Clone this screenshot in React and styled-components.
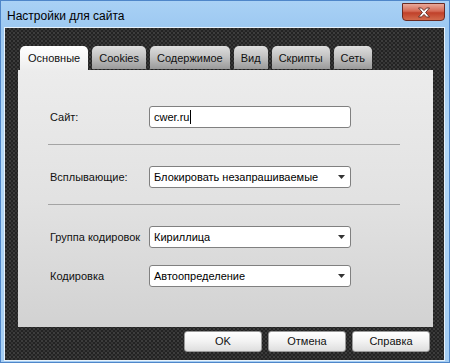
import React from "react";
import styled, { createGlobalStyle } from "styled-components";

const GlobalStyle = createGlobalStyle`
  body {
    margin: 0;
    font-family: "Liberation Sans", Arial, sans-serif;
  }
`;

const tabs = ["Основные", "Cookies", "Содержимое", "Вид", "Скрипты", "Сеть"];

function Select({ value }) {
  return (
    <Field>
      <span>{value}</span>
      <Arrow viewBox="0 0 7 4">
        <path d="M0 0h7L3.5 4z" fill="#333" />
      </Arrow>
    </Field>
  );
}

function App() {
  return (
    <>
      <GlobalStyle />
      <Window>
        <TitleBar>
          <Title>Настройки для сайта</Title>
          <CloseButton>
            <svg width="14" height="11" viewBox="0 0 14 11">
              <path
                d="M1.5 1h3l2.5 2.6L9.5 1h3L8.6 5.5l3.9 4.5h-3L7 7.4 4.5 10h-3l3.9-4.5z"
                fill="#fff"
                stroke="#5a2a24"
                strokeWidth="0.9"
                strokeLinejoin="round"
              />
            </svg>
          </CloseButton>
        </TitleBar>
        <Body>
          <TabRow>
            {tabs.map((t, i) => (
              <Tab key={t} $active={i === 0}>{t}</Tab>
            ))}
          </TabRow>
          <Panel>
            <Row>
              <Label>Сайт:</Label>
              <Field>
                <span>
                  cwer.ru
                  <Caret />
                </span>
              </Field>
            </Row>
            <Divider />
            <Row>
              <Label>Всплывающие:</Label>
              <Select value="Блокировать незапрашиваемые" />
            </Row>
            <Divider />
            <Row>
              <Label>Группа кодировок</Label>
              <Select value="Кириллица" />
            </Row>
            <Row $gap={17}>
              <Label>Кодировка</Label>
              <Select value="Автоопределение" />
            </Row>
          </Panel>
          <ButtonRow>
            <Button>OK</Button>
            <Button>Отмена</Button>
            <Button>Справка</Button>
          </ButtonRow>
        </Body>
      </Window>
    </>
  );
}

const Window = styled.div`
  width: 450px;
  height: 363px;
  box-sizing: border-box;
  border: 1px solid #4f86c9;
  background: linear-gradient(180deg, #a9d1f5 0%, #9cc8f1 8%, #b4d8f7 40%, #a4cdf3 100%);
  display: flex;
  flex-direction: column;
`;

const TitleBar = styled.div`
  height: 26px;
  display: flex;
  justify-content: space-between;
  padding: 0 4px 0 6px;
`;

const Title = styled.div`
  font-size: 12px;
  color: #000;
  line-height: 30px;
`;

const CloseButton = styled.div`
  width: 43px;
  height: 18px;
  margin-top: 2px;
  box-sizing: border-box;
  border: 1px solid #6b2a22;
  border-radius: 0 0 4px 4px;
  background: linear-gradient(180deg, #e9a99a 0%, #d56a55 45%, #c0412a 55%, #d26a4c 100%);
  display: flex;
  align-items: center;
  justify-content: center;
`;

const Body = styled.div`
  flex: 1;
  margin: 0 4px 1px 3px;
  border: 1px solid #e8f2fb;
  background-color: #232323;
  background-image: radial-gradient(circle at 1px 1px, #3d3d3d 0.9px, transparent 1.3px),
    radial-gradient(circle at 3px 3px, #353535 0.9px, transparent 1.3px);
  background-size: 4px 4px;
  padding: 18px 11px 7px 13px;
  display: flex;
  flex-direction: column;
`;

const TabRow = styled.div`
  display: flex;
  gap: 4px;
  padding-left: 2px;
  height: 24px;
`;

const Tab = styled.div`
  box-sizing: border-box;
  height: ${(p) => (p.$active ? "25px" : "23px")};
  padding: 0 ${(p) => (p.$active ? 8 : 7)}px;
  border-radius: 5px 5px 0 0;
  font-size: 11px;
  line-height: 24px;
  color: #111;
  background: ${(p) =>
    p.$active
      ? "linear-gradient(180deg, #ffffff 0%, #f4f4f4 60%, #ececec 100%)"
      : "linear-gradient(180deg, #dedede 0%, #c4c4c4 45%, #9a9a9a 100%)"};
  position: relative;
  z-index: ${(p) => (p.$active ? 1 : 0)};
`;

const Panel = styled.div`
  height: 257px;
  box-sizing: border-box;
  background: linear-gradient(180deg, #ececec 0%, #e2e2e2 50%, #d2d2d2 100%);
  padding: 36px 0 0 30px;
  display: flex;
  flex-direction: column;
`;

const Row = styled.div`
  display: flex;
  align-items: center;
  margin-top: ${(p) => p.$gap || 0}px;
`;

const Label = styled.div`
  width: 101px;
  padding-left: 2px;
  box-sizing: border-box;
  font-size: 11px;
  color: #111;
`;

const Field = styled.div`
  width: 202px;
  height: 22px;
  box-sizing: border-box;
  border: 1px solid #808080;
  border-radius: 3px;
  background: #fff;
  display: flex;
  align-items: center;
  padding: 0 4px;
  font-size: 11px;
  color: #000;
  span {
    flex: 1;
    white-space: nowrap;
    display: flex;
    align-items: center;
  }
`;

const Caret = styled.i`
  display: inline-block;
  width: 1px;
  height: 14px;
  margin-left: 1px;
  background: #000;
`;

const Arrow = styled.svg`
  width: 7px;
  height: 4px;
  margin-right: 1px;
`;

const Divider = styled.div`
  width: 352px;
  height: 1px;
  background: #a4a4a4;
  margin: 16px 0 21px;
`;

const ButtonRow = styled.div`
  display: flex;
  justify-content: flex-end;
  gap: 6px;
  margin-top: 4px;
  padding-right: 3px;
`;

const Button = styled.div`
  width: 78px;
  height: 21px;
  box-sizing: border-box;
  border-radius: 3px;
  border: 1px solid #9a9a9a;
  background: linear-gradient(180deg, #ffffff 0%, #f2f2f2 50%, #dedede 100%);
  font-size: 11px;
  line-height: 19px;
  text-align: center;
  color: #111;
`;

export default App;
